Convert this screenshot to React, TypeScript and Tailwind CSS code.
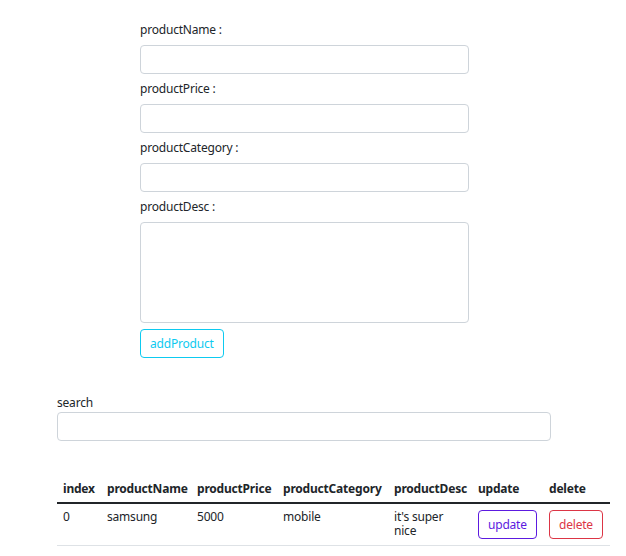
import React from "react";

const font = { fontFamily: '"Noto Sans", "Liberation Sans", sans-serif' };

function Field({ label, area }: { label: string; area?: boolean }) {
  return (
    <div className="mb-[6px]">
      <label className="block mb-[6px] text-[12px] leading-[18px] text-[#212529] tracking-[-0.2px]">{label}</label>
      {area ? (
        <textarea className="block w-full h-[101px] rounded-[4px] border border-[#ced4da] bg-white resize-none" />
      ) : (
        <input className="block w-full h-[29px] rounded-[4px] border border-[#ced4da] bg-white" />
      )}
    </div>
  );
}

export default function App() {
  const th = "px-[6px] py-[6px] text-left font-bold text-[12px] leading-[14px] text-[#212529] align-top tracking-[-0.2px]";
  const td = "px-[6px] py-[6px] text-left text-[12px] leading-[14px] text-[#212529] align-top tracking-[-0.2px]";
  const btn = "h-[29px] px-[9px] rounded-[4px] border text-[12px] leading-[18px] tracking-[-0.2px]";
  return (
    <div className="bg-white w-[626px] h-[556px] overflow-hidden" style={font}>
      <div className="pt-[21px] ml-[140px] w-[329px]">
        <Field label="productName :" />
        <Field label="productPrice :" />
        <Field label="productCategory :" />
        <Field label="productDesc :" area />
        <button className={`${btn} border-[#0dcaf0] text-[#0dcaf0]`}>addProduct</button>
      </div>
      <div className="ml-[57px] mt-[36px] w-[494px]">
        <label className="block text-[12px] leading-[18px] text-[#212529] tracking-[-0.2px]">search</label>
        <input className="block w-full h-[29px] rounded-[4px] border border-[#ced4da] bg-white" />
      </div>
      <table className="ml-[57px] mt-[35px] w-[553px] border-collapse table-fixed">
        <colgroup>
          <col className="w-[44px]" />
          <col className="w-[90px]" />
          <col className="w-[86px]" />
          <col className="w-[111px]" />
          <col className="w-[84px]" />
          <col className="w-[71px]" />
          <col className="w-[67px]" />
        </colgroup>
        <thead>
          <tr className="border-b-[2px] border-[#212529]">
            <th className={th}>index</th>
            <th className={th}>productName</th>
            <th className={th}>productPrice</th>
            <th className={th}>productCategory</th>
            <th className={th}>productDesc</th>
            <th className={th}>update</th>
            <th className={th}>delete</th>
          </tr>
        </thead>
        <tbody>
          <tr className="border-b border-[#dee2e6]">
            <td className={td}>0</td>
            <td className={td}>samsung</td>
            <td className={td}>5000</td>
            <td className={td}>mobile</td>
            <td className={td}>it's super nice</td>
            <td className={td}>
              <button className={`${btn} border-[#5c1ae0] text-[#5c1ae0]`}>update</button>
            </td>
            <td className={td}>
              <button className={`${btn} border-[#dc3545] text-[#dc3545]`}>delete</button>
            </td>
          </tr>
        </tbody>
      </table>
    </div>
  );
}
